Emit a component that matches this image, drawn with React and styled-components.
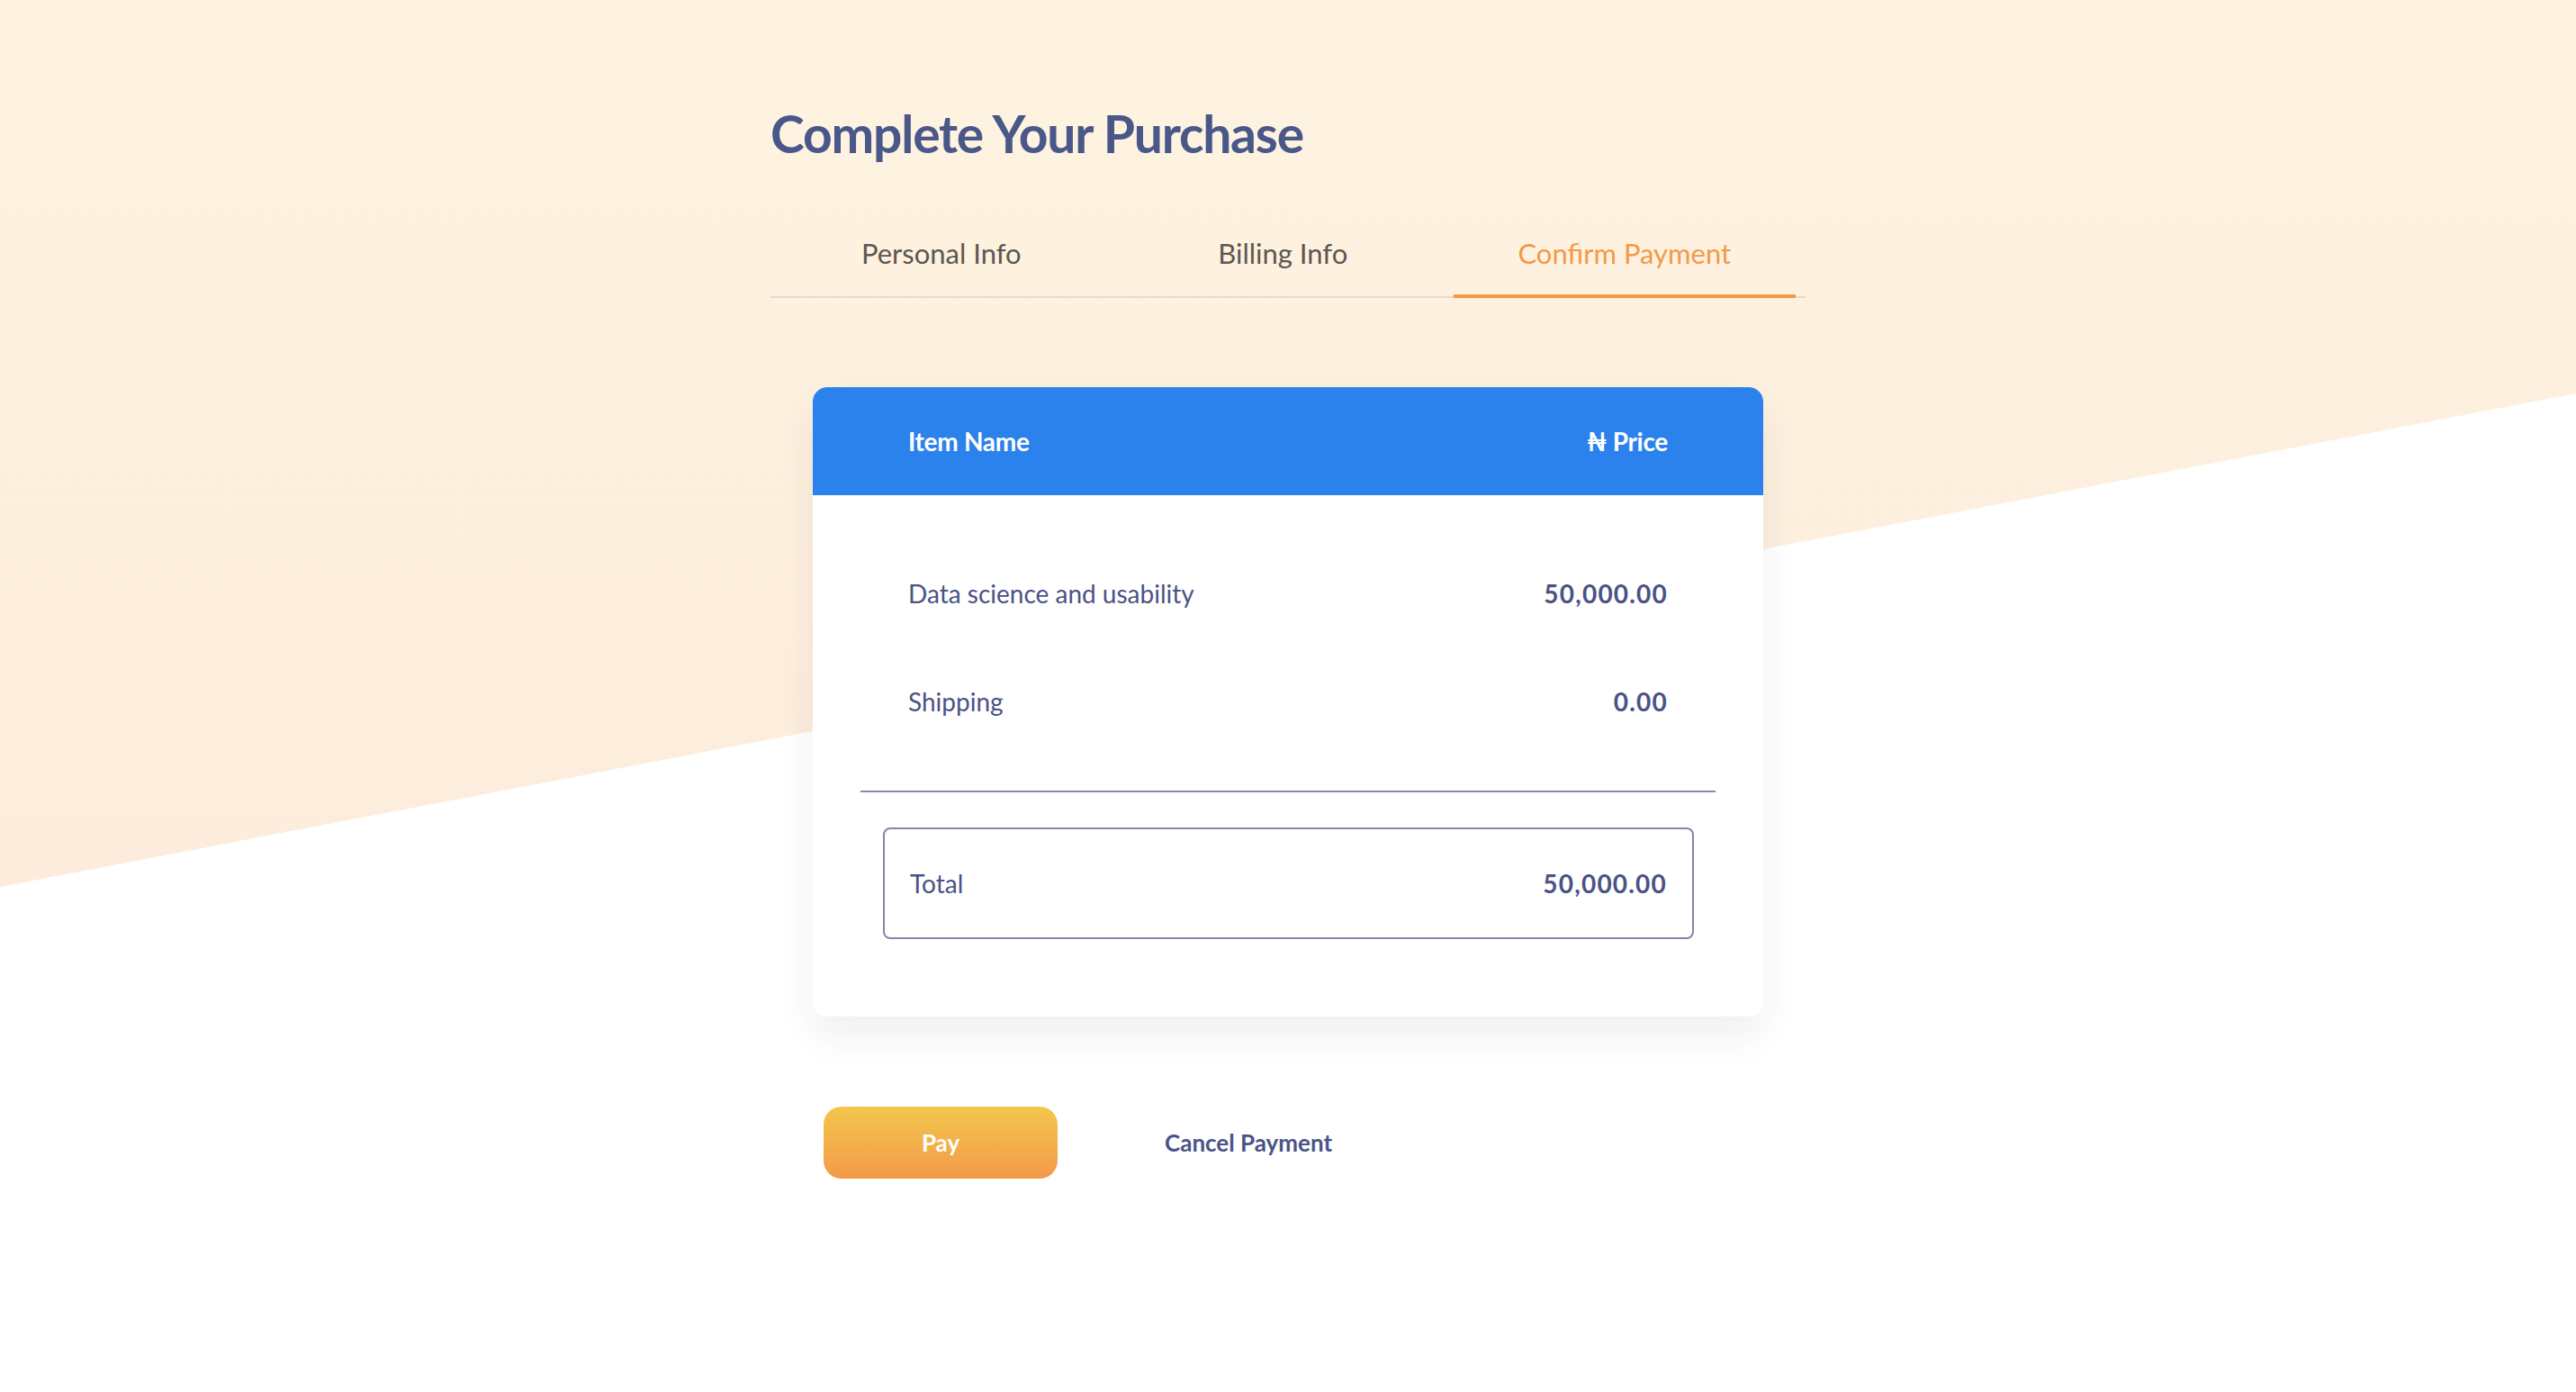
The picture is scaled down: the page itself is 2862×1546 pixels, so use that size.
import React from 'react'
import styled, { createGlobalStyle } from 'styled-components';

const GlobalStyle = createGlobalStyle`
  html, body {
    margin: 0;
    padding: 0;
    background: #fff;
  }
  body {
    font-family: Lato, "Noto Sans", "DejaVu Sans", sans-serif;
  }
`

const tabs = ['Personal Info', 'Billing Info', 'Confirm Payment']

const items = [
  { name: 'Data science and usability', price: '50,000.00' },
  { name: 'Shipping', price: '0.00' },
]

export default function App() {
  return (
    <Page>
      <GlobalStyle />
      <Content>
        <Title>Complete Your Purchase</Title>

        <TabBar>
          {tabs.map((t, i) => (
            <Tab key={t} $active={i === 2}>{t}</Tab>
          ))}
        </TabBar>

        <Card>
          <CardHeader>
            <span>Item Name</span>
            <span>₦ Price</span>
          </CardHeader>
          <CardBody>
            {items.map((it) => (
              <ItemRow key={it.name}>
                <ItemName>{it.name}</ItemName>
                <ItemPrice>{it.price}</ItemPrice>
              </ItemRow>
            ))}
            <Divider />
            <TotalBox>
              <ItemName>Total</ItemName>
              <ItemPrice>50,000.00</ItemPrice>
            </TotalBox>
          </CardBody>
        </Card>

        <Actions>
          <PayButton type="button">Pay</PayButton>
          <CancelLink type="button">Cancel Payment</CancelLink>
        </Actions>
      </Content>
    </Page>
  )
}

const Page = styled.div`
  position: relative;
  min-height: 100vh;
  overflow: hidden;

  &::before {
    content: '';
    position: absolute;
    top: 0;
    left: 0;
    right: 0;
    height: 985px;
    background: linear-gradient(180deg, #fef3e1 0%, #fdecdb 100%);
    clip-path: polygon(0 0, 100% 0, 100% 437px, 0 985px);
  }
`

const Content = styled.div`
  position: relative;
  width: 1150px;
  margin: 0 auto;
  padding-top: 113px;
`

const Title = styled.h1`
  margin: 0;
  font-size: 57px;
  line-height: 70px;
  font-weight: 700;
  letter-spacing: -1.2px;
  color: #4a5789;
`

const TabBar = styled.div`
  display: flex;
  margin-top: 80px;
  border-bottom: 2px solid #e4dccf;
`

const Tab = styled.div`
  width: 33%;
  text-align: center;
  font-size: 31px;
  line-height: 36px;
  padding-bottom: 28px;
  color: ${(p) => (p.$active ? '#f29a48' : '#5b5751')};
  border-bottom: 4px solid ${(p) => (p.$active ? '#f29a48' : 'transparent')};
  margin-bottom: -2px;
`

const Card = styled.div`
  margin: 99px 47px 0;
  background: #fff;
  border-radius: 16px;
  overflow: hidden;
  box-shadow: 0 22px 40px rgba(40, 40, 80, 0.07);
`

const CardHeader = styled.div`
  height: 120px;
  background: #2c82ec;
  color: #fff;
  display: flex;
  align-items: center;
  justify-content: space-between;
  padding: 0 106px;
  font-size: 28px;
  font-weight: 700;
  letter-spacing: -0.3px;
`

const CardBody = styled.div`
  padding: 49px 0 86px;
`

const ItemRow = styled.div`
  height: 120px;
  display: flex;
  align-items: center;
  justify-content: space-between;
  padding: 0 106px;
`

const ItemName = styled.span`
  font-size: 28px;
  color: #4a5286;
`

const ItemPrice = styled.span`
  font-size: 28px;
  font-weight: 700;
  letter-spacing: 1.2px;
  color: #4a5286;
`

const Divider = styled.div`
  margin: 39px 53px 39px;
  height: 2px;
  background: #8987ab;
`

const TotalBox = styled.div`
  margin: 0 77px 0 78px;
  height: 120px;
  border: 2px solid #8785a9;
  border-radius: 8px;
  display: flex;
  align-items: center;
  justify-content: space-between;
  padding: 0 28px;
`

const Actions = styled.div`
  display: flex;
  align-items: center;
  gap: 119px;
  margin: 100px 0 0 59px;
`

const PayButton = styled.button`
  width: 260px;
  height: 80px;
  border: none;
  border-radius: 20px;
  background: linear-gradient(180deg, #f3c74c 0%, #f39a4a 100%);
  color: #fff;
  font-family: inherit;
  font-size: 26px;
  font-weight: 700;
  cursor: pointer;
`

const CancelLink = styled.button`
  border: none;
  background: none;
  padding: 0;
  font-family: inherit;
  font-size: 26px;
  font-weight: 700;
  color: #4a5488;
  cursor: pointer;
`
